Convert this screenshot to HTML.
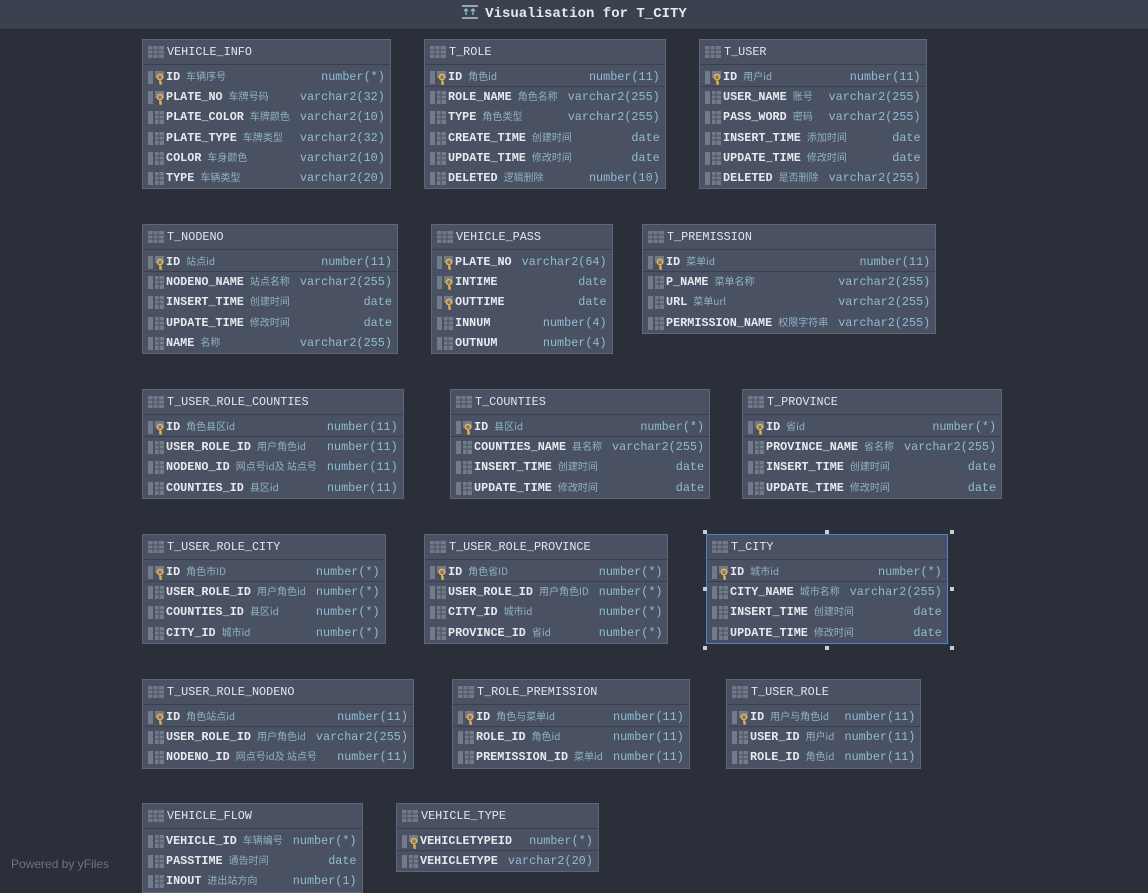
<!DOCTYPE html><html><head><meta charset="utf-8"><style>
body{margin:0;width:1148px;height:882px;background:#2b2f3a;overflow:hidden;position:relative;font-family:"Liberation Mono","Noto Sans CJK SC",monospace}
.top{position:absolute;left:0;top:0;width:1148px;height:29px;background:#3c4150;border-bottom:1px solid #232630;color:#e6e9ee;font-weight:bold;font-size:14px;text-align:center;line-height:29px}
.t{position:absolute;background:#4a5163;border:1px solid #5e6678;box-sizing:border-box}
.t.sel{border-color:#4a86d0}
.h{height:24px;border-bottom:1px solid #3a3f4c;color:#e3e6ec;font-size:11.8px;line-height:24px;padding-left:24px;position:relative;margin-bottom:2px}
.r{height:20.2px;line-height:20px;position:relative;padding-left:23px;padding-right:5px;white-space:nowrap;font-size:11.8px;display:flex;align-items:baseline}
.r.sep{border-bottom:1px solid #3a3f4c;height:19.2px}
.n{color:#e6e9ee;font-weight:bold}
.c{color:#8fb3c4;font-size:10px;font-family:"Noto Sans CJK SC",sans-serif;margin-left:6px;line-height:10px}
.sp{flex:1;min-width:10px}
.ty{color:#8fbdd0}
.i{position:absolute;left:5px;top:4px}
.sel-h{position:absolute;width:4px;height:4px;background:#c8ccd4}
.pw{position:absolute;left:11px;top:857px;color:#6d7381;font-family:"Liberation Sans",sans-serif;font-size:12px}
</style></head><body>
<div class="top"><svg width="18" height="16" style="vertical-align:-3px;margin-right:6px"><rect x="1" y="1" width="16" height="2" fill="#9aa2b0"/><rect x="1" y="13" width="16" height="2" fill="#9aa2b0"/><path d="M5 11V5M3 7l2-2 2 2M12 11V5M10 7l2-2 2 2" stroke="#7fc1d6" fill="none" stroke-width="1.3"/></svg>Visualisation for T_CITY</div>
<div id="c"></div>
<div class="pw">Powered by yFiles</div>
<script>
const T=[
["VEHICLE_INFO",142,39,[["k","ID","车辆序号","number(*)"],["k","PLATE_NO","车牌号码","varchar2(32)"],["","PLATE_COLOR","车牌颜色","varchar2(10)"],["","PLATE_TYPE","车牌类型","varchar2(32)"],["","COLOR","车身颜色","varchar2(10)"],["","TYPE","车辆类型","varchar2(20)"]],0],
["T_ROLE",424,39,[["k","ID","角色id","number(11)"],["","ROLE_NAME","角色名称","varchar2(255)"],["","TYPE","角色类型","varchar2(255)"],["","CREATE_TIME","创建时间","date"],["","UPDATE_TIME","修改时间","date"],["","DELETED","逻辑删除","number(10)"]],1],
["T_USER",699,39,[["k","ID","用户id","number(11)"],["","USER_NAME","账号","varchar2(255)"],["","PASS_WORD","密码","varchar2(255)"],["","INSERT_TIME","添加时间","date"],["","UPDATE_TIME","修改时间","date"],["","DELETED","是否删除","varchar2(255)"]],1],
["T_NODENO",142,224,[["k","ID","站点id","number(11)"],["","NODENO_NAME","站点名称","varchar2(255)"],["","INSERT_TIME","创建时间","date"],["","UPDATE_TIME","修改时间","date"],["","NAME","名称","varchar2(255)"]],1],
["VEHICLE_PASS",431,224,[["k","PLATE_NO","","varchar2(64)"],["k","INTIME","","date"],["k","OUTTIME","","date"],["","INNUM","","number(4)"],["","OUTNUM","","number(4)"]],0],
["T_PREMISSION",642,224,[["k","ID","菜单id","number(11)"],["","P_NAME","菜单名称","varchar2(255)"],["","URL","菜单url","varchar2(255)"],["","PERMISSION_NAME","权限字符串","varchar2(255)"]],1],
["T_USER_ROLE_COUNTIES",142,389,[["k","ID","角色县区id","number(11)"],["","USER_ROLE_ID","用户角色id","number(11)"],["","NODENO_ID","网点号id及 站点号","number(11)"],["","COUNTIES_ID","县区id","number(11)"]],1],
["T_COUNTIES",450,389,[["k","ID","县区id","number(*)"],["","COUNTIES_NAME","县名称","varchar2(255)"],["","INSERT_TIME","创建时间","date"],["","UPDATE_TIME","修改时间","date"]],1],
["T_PROVINCE",742,389,[["k","ID","省id","number(*)"],["","PROVINCE_NAME","省名称","varchar2(255)"],["","INSERT_TIME","创建时间","date"],["","UPDATE_TIME","修改时间","date"]],1],
["T_USER_ROLE_CITY",142,534,[["k","ID","角色市ID","number(*)"],["","USER_ROLE_ID","用户角色id","number(*)"],["","COUNTIES_ID","县区id","number(*)"],["","CITY_ID","城市id","number(*)"]],1],
["T_USER_ROLE_PROVINCE",424,534,[["k","ID","角色省ID","number(*)"],["","USER_ROLE_ID","用户角色ID","number(*)"],["","CITY_ID","城市id","number(*)"],["","PROVINCE_ID","省id","number(*)"]],1],
["T_CITY",706,534,[["k","ID","城市id","number(*)"],["","CITY_NAME","城市名称","varchar2(255)"],["","INSERT_TIME","创建时间","date"],["","UPDATE_TIME","修改时间","date"]],1,1],
["T_USER_ROLE_NODENO",142,679,[["k","ID","角色站点id","number(11)"],["","USER_ROLE_ID","用户角色id","varchar2(255)"],["","NODENO_ID","网点号id及 站点号","number(11)"]],1],
["T_ROLE_PREMISSION",452,679,[["k","ID","角色与菜单id","number(11)"],["","ROLE_ID","角色id","number(11)"],["","PREMISSION_ID","菜单id","number(11)"]],1],
["T_USER_ROLE",726,679,[["k","ID","用户与角色id","number(11)"],["","USER_ID","用户id","number(11)"],["","ROLE_ID","角色id","number(11)"]],1],
["VEHICLE_FLOW",142,803,[["","VEHICLE_ID","车辆编号","number(*)"],["","PASSTIME","通告时间","date"],["","INOUT","进出站方向","number(1)"]],0],
["VEHICLE_TYPE",396,803,[["k","VEHICLETYPEID","","number(*)"],["","VEHICLETYPE","","varchar2(20)"]],1]];
const grid='<svg class="i" width="16" height="12" style="top:6px"><rect x="0" y="0" width="16" height="12" fill="#727a8a"/><path d="M0 4h16M0 8h16M5 0v12M10 0v12" stroke="#4a5163"/></svg>';
const col='<svg class="i" width="16" height="13"><rect x="0" y="0" width="5" height="13" fill="#737b8b"/><rect x="7" y="0" width="9" height="13" fill="#737b8b"/><path d="M7 4h9M7 8h9M11 0v13" stroke="#4a5163"/></svg>';
const key='<svg class="i" width="16" height="14"><rect x="0" y="0" width="5" height="13" fill="#737b8b"/><rect x="7" y="0" width="9" height="7" fill="#737b8b"/><circle cx="12" cy="6" r="2.6" fill="none" stroke="#e6b44a" stroke-width="1.6"/><path d="M12 8.5v5M12 11h2M12 13h2" stroke="#e6b44a" stroke-width="1.5"/></svg>';
let h='';
for(const t of T){const[n,x,y,rows,sep,sel]=t;
h+=`<div class="t${sel?' sel':''}" id="t_${n}" style="left:${x}px;top:${y}px"><div class="h">${grid}${n}</div>`;
rows.forEach((r,i)=>{const last=sep&&r[0]=='k'&&(i+1<rows.length&&rows[i+1][0]!='k');
h+=`<div class="r${last?' sep':''}">${r[0]=='k'?key:col}<span class="n">${r[1]}</span>${r[2]?`<span class="c">${r[2]}</span>`:''}<span class="sp"></span><span class="ty">${r[3]}</span></div>`});
h+='</div>';}
document.getElementById('c').innerHTML=h;
const e=document.getElementById('t_T_CITY');const x=706,y=534,w=e.offsetWidth,hh=e.offsetHeight;
let s='';for(const[a,b]of[[x-3,y-4],[x+w/2-2,y-4],[x+w+2,y-4],[x-3,y+hh/2-2],[x+w+2,y+hh/2-2],[x-3,y+hh+2],[x+w/2-2,y+hh+2],[x+w+2,y+hh+2]])s+=`<div class="sel-h" style="left:${a}px;top:${b}px"></div>`;
document.getElementById('c').insertAdjacentHTML('beforeend',s);
</script></body></html>
